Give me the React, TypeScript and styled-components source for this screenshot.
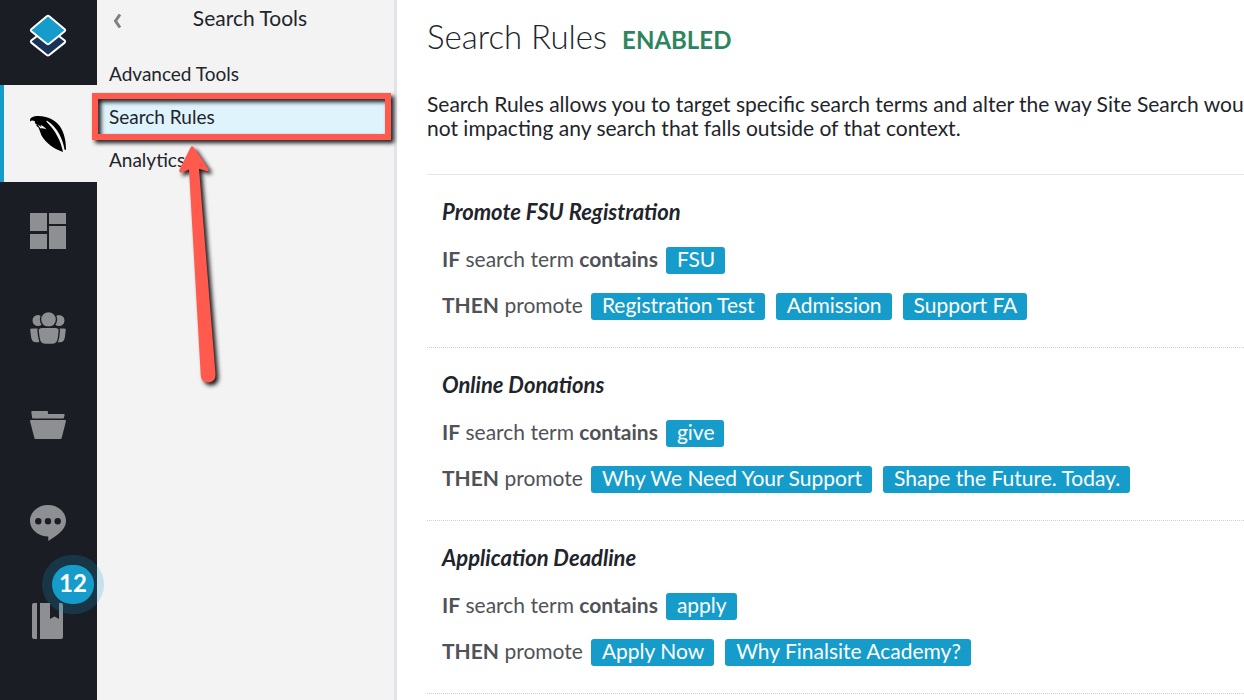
import React from "react";
import styled, { createGlobalStyle, css } from "styled-components";

const Global = createGlobalStyle`
  * { box-sizing: border-box; }
  body {
    margin: 0;
    background: #fff;
    color: #22242b;
    font-family: Lato, "Liberation Sans", sans-serif;
    overflow-x: hidden;
  }
`;

const Shell = styled.div`
  display: flex;
  min-height: 100vh;
`;

const Rail = styled.nav`
  flex: none;
  width: 97px;
  background: #1a1d24;
  display: flex;
  flex-direction: column;
`;

const Brand = styled.a`
  height: 85px;
  padding: 14px 2px 0 0;
  display: flex;
  justify-content: center;
  align-items: flex-start;
`;

const RailButton = styled.button<{ $active?: boolean }>`
  position: relative;
  height: 97px;
  padding: 0 2px 0 0;
  border: 0;
  background: transparent;
  color: #8e8f93;
  display: flex;
  align-items: center;
  justify-content: center;
  svg { display: block; }
  ${(p) =>
    p.$active &&
    css`
      background: #f3f3f3;
      color: #000;
      box-shadow: inset 4px 0 0 #159ccb;
    `}
`;

const Badge = styled.span`
  position: absolute;
  z-index: 2;
  top: -5px;
  left: 52px;
  width: 42px;
  height: 39px;
  border-radius: 20px;
  background: #159ccb;
  box-shadow: 0 0 0 10px rgba(21, 156, 203, 0.2);
  color: #fff;
  font: 700 24px/35px Lato, sans-serif;
  text-align: center;
`;

const Panel = styled.aside`
  position: relative;
  flex: none;
  width: 300px;
  background: #f3f3f3;
  border-right: 3px solid #e3e3e8;
`;

const PanelHead = styled.header`
  display: grid;
  grid-template-columns: 42px 1fr 33px;
  align-items: start;
  height: 52px;
`;

const Back = styled.button`
  padding: 14px 0 0 16px;
  border: 0;
  background: none;
  text-align: left;
  svg { display: block; }
`;

const PanelTitle = styled.h2`
  margin: 0;
  padding-top: 6px;
  font-size: 21px;
  line-height: 24px;
  font-weight: 400;
  text-align: center;
`;

const Menu = styled.ul`
  margin: 0;
  padding: 0;
  list-style: none;
`;

const MenuItem = styled.li<{ $selected?: boolean }>`
  position: relative;
  background: ${(p) => (p.$selected ? "#def3fb" : "transparent")};
`;

const MenuLink = styled.a`
  display: block;
  padding: 0 12px;
  font-size: 19px;
  line-height: 43px;
  color: inherit;
  text-decoration: none;
`;

const Callout = styled.span`
  position: absolute;
  z-index: 3;
  top: -2px;
  bottom: -2px;
  left: -5px;
  right: 3px;
  border: 6px solid #ff5a4d;
  filter: drop-shadow(3px 3px 2px rgba(0, 0, 0, 0.9));
  pointer-events: none;
`;

const Pointer = styled.svg`
  position: absolute;
  z-index: 3;
  top: 140px;
  left: 73px;
  overflow: visible;
  filter: drop-shadow(3px 3px 2px rgba(0, 0, 0, 0.9));
  pointer-events: none;
`;

const Main = styled.main`
  flex: 1;
  min-width: 0;
  padding: 15px 0 0 30px;
  overflow: hidden;
`;

const Heading = styled.div`
  display: flex;
  align-items: baseline;
  gap: 15px;
`;

const Title = styled.h1`
  margin: 0;
  font-size: 33px;
  line-height: 42px;
  font-weight: 300;
`;

const Status = styled.strong`
  font-size: 24px;
  line-height: 32px;
  font-weight: 700;
  color: #2d8560;
`;

const Intro = styled.p`
  margin: 35px 0 34px;
  font-size: 21px;
  line-height: 24px;
  white-space: nowrap;
`;

const Rules = styled.section`
  border-top: 1px solid #e6e6e6;
`;

const Rule = styled.article`
  height: 173px;
  padding: 23px 15px 0;
  border-bottom: 1px dotted #d0d0d0;
`;

const RuleName = styled.h3`
  margin: 0 0 21px;
  font-size: 22px;
  line-height: 28px;
  font-weight: 700;
  font-style: italic;
`;

const Clause = styled.p`
  display: flex;
  align-items: flex-start;
  margin: 0 0 19px;
  font-size: 21px;
  line-height: 24px;
  color: #505257;
  white-space: pre;
`;

const Chips = styled.span`
  display: flex;
  gap: 11px;
  margin-left: 8px;
`;

const Chip = styled.span`
  height: 27px;
  padding: 0 10px 0 11px;
  border-radius: 3px;
  background: #159ccb;
  color: #fff;
`;

const LogoIcon = () => (
  <svg width="38" height="44" viewBox="0 0 38 44" stroke="#fff" strokeWidth="2" strokeLinejoin="round">
    <path d="M2.300 26.500 L17.800 14.500 H20.200 L35.700 26.500 Q36.600 27.600 35.700 28.600 L20.200 41 Q19 42 17.800 41 L2.300 28.600 Q1.400 27.600 2.300 26.500 Z" fill="#193257" />
    <path d="M2.3 15.2 L17.8 2.2 Q19 1.3 20.2 2.2 L35.7 15.2 Q36.6 16.3 35.7 17.2 L20.2 29.8 Q19 30.7 17.8 29.8 L2.3 17.2 Q1.4 16.3 2.3 15.2 Z" fill="#159ccb" />
  </svg>
);

const FeatherIcon = () => (
  <svg width="36" height="36" viewBox="0 0 36 36" fill="currentColor">
    <path d="M0 4 C.5 1 4 0 8 0 C19 0 27 5 31 12 C35 19 36 27 36 34 L34.500 33.500 C33 24 28 12 17.500 5 C16.500 4.500 16 5.200 16.800 6 C25 14 31 25 33 36 C23 32.500 16 27 11.500 19.500 L8.500 11.500 L6.500 10 L6.500 8 L5 7.500 L5 5.500 C3 4 1.500 4 0 5.500 Z" />
    <path d="M7.500 8.500 L11.500 11 L10.500 9 C13 9.800 15 11.500 16.500 13.500 C14 12.300 12.500 12.300 10.500 12.300 L12 14.500 Z" fill="#f3f3f3" />
  </svg>
);

const GridIcon = () => (
  <svg width="36" height="36" viewBox="0 0 36 36" fill="currentColor">
    <path d="M0 0h17v18H0z M0 21h17v15H0z M19 0h17v11H19z M19 13h17v23H19z" />
  </svg>
);

const PeopleIcon = () => (
  <svg width="36" height="32" viewBox="0 0 36 32" fill="currentColor" stroke="#1a1d24" strokeWidth="1.4">
    <circle cx="8" cy="8.500" r="6.200" />
    <circle cx="29" cy="8.500" r="6.200" />
    <path d="M-.5 17.500 Q-.5 15.700 2 15.700 H10 V31 H5 Q1.500 30.500 .5 26 Z" />
    <path d="M36.500 17.500 Q36.500 15.700 34 15.700 H26 V31 H31 Q34.500 30.500 35.500 26 Z" />
    <circle cx="18.500" cy="7.500" r="8" />
    <path d="M8 18.500 Q8 15.300 12 15.300 H25.500 Q29.300 15.300 29.300 18.500 L28.500 26 Q27.500 32.500 22 32.500 H15.500 Q10 32.500 9 26 Z" />
  </svg>
);

const FolderIcon = () => (
  <svg width="36" height="28" viewBox="0 0 36 28" fill="currentColor">
    <path d="M1.300 1 Q1.300 0 2.300 0 H17 Q18 0 18 1 V3 H34 Q34.800 3 34.600 4 L33.800 7 Q33.600 7.500 33 7.500 H3 Q2.300 7.500 2.200 7 Z" />
    <path d="M1 9 H35 Q36 9 36 10 L31.700 27 Q31.400 28 30.500 28 H5.500 Q4.700 28 4.400 27 L0 10 Q0 9 1 9 Z" />
  </svg>
);

const ChatIcon = () => (
  <svg width="36" height="38" viewBox="0 -2 36 38" fill="currentColor">
    <path d="M18 0 C28 0 36 7 36 15.800 C36 21 33 25 29 28.500 C25 31.500 21 34 18.300 36 V31.500 C8 31.500 0 24.500 0 15.800 C0 7 8 0 18 0 Z" />
    <g fill="#1a1d24">
      <circle cx="8.300" cy="16.300" r="3.200" />
      <circle cx="18" cy="16.300" r="3.200" />
      <circle cx="27.700" cy="16.300" r="3.200" />
    </g>
  </svg>
);

const BookIcon = () => (
  <svg width="32" height="40" viewBox="0 -4 32 40" fill="currentColor">
    <path d="M2 0 H5 V36 H2 Q0 36 0 34 V2 Q0 0 2 0 Z M8 0 H18 V16 L22.500 13.500 L27 16 V0 H29 Q31 0 31 2 V34 Q31 36 29 36 H8 Z" />
  </svg>
);

type RuleData = { name: string; term: string; promote: string[] };

const rules: RuleData[] = [
  { name: "Promote FSU Registration", term: "FSU", promote: ["Registration Test", "Admission", "Support FA"] },
  { name: "Online Donations", term: "give", promote: ["Why We Need Your Support", "Shape the Future. Today."] },
  { name: "Application Deadline", term: "apply", promote: ["Apply Now", "Why Finalsite Academy?"] },
];

export default function App() {
  return (
    <>
      <Global />
      <Shell>
        <Rail aria-label="Modules">
          <Brand href="#" aria-label="Home"><LogoIcon /></Brand>
          <RailButton $active aria-label="Composer"><FeatherIcon /></RailButton>
          <RailButton aria-label="Dashboard"><GridIcon /></RailButton>
          <RailButton aria-label="Constituents"><PeopleIcon /></RailButton>
          <RailButton aria-label="Files"><FolderIcon /></RailButton>
          <RailButton aria-label="Messages"><ChatIcon /></RailButton>
          <RailButton aria-label="Resources">
            <BookIcon />
            <Badge>12</Badge>
          </RailButton>
        </Rail>

        <Panel>
          <PanelHead>
            <Back aria-label="Back">
              <svg width="9" height="14" viewBox="0 0 9 14" fill="none" stroke="#808080" strokeWidth="3">
                <path d="M7 .5 L2.500 7 L7 13.500" />
              </svg>
            </Back>
            <PanelTitle>Search Tools</PanelTitle>
          </PanelHead>
          <Menu>
            <MenuItem><MenuLink href="#">Advanced Tools</MenuLink></MenuItem>
            <MenuItem $selected>
              <MenuLink href="#" aria-current="page">Search Rules</MenuLink>
              <Callout />
            </MenuItem>
            <MenuItem><MenuLink href="#">Analytics</MenuLink></MenuItem>
          </Menu>
          <Pointer width="60" height="250" viewBox="170 140 60 250" fill="#ff5a4d">
            <path d="M190.500 147.500 Q192 145 194 147.500 L208.500 169 Q209.500 171.500 206.500 171 L199 168.800 L215.500 374.500 Q215.500 382 208.500 382.500 Q201.500 382.500 200.800 376 L189 169.500 L181.500 172.500 Q178.500 173 179.500 169.500 Z" />
          </Pointer>
        </Panel>

        <Main>
          <Heading>
            <Title>Search Rules</Title>
            <Status>ENABLED</Status>
          </Heading>
          <Intro>
            Search Rules allows you to target specific search terms and alter the way Site Search would
            <br />
            not impacting any search that falls outside of that context.
          </Intro>
          <Rules>
            {rules.map((r) => (
              <Rule key={r.name}>
                <RuleName>{r.name}</RuleName>
                <Clause>
                  <b>IF</b> search term <b>contains</b>
                  <Chips><Chip>{r.term}</Chip></Chips>
                </Clause>
                <Clause>
                  <b>THEN</b> promote
                  <Chips>{r.promote.map((p) => <Chip key={p}>{p}</Chip>)}</Chips>
                </Clause>
              </Rule>
            ))}
          </Rules>
        </Main>
      </Shell>
    </>
  );
}
